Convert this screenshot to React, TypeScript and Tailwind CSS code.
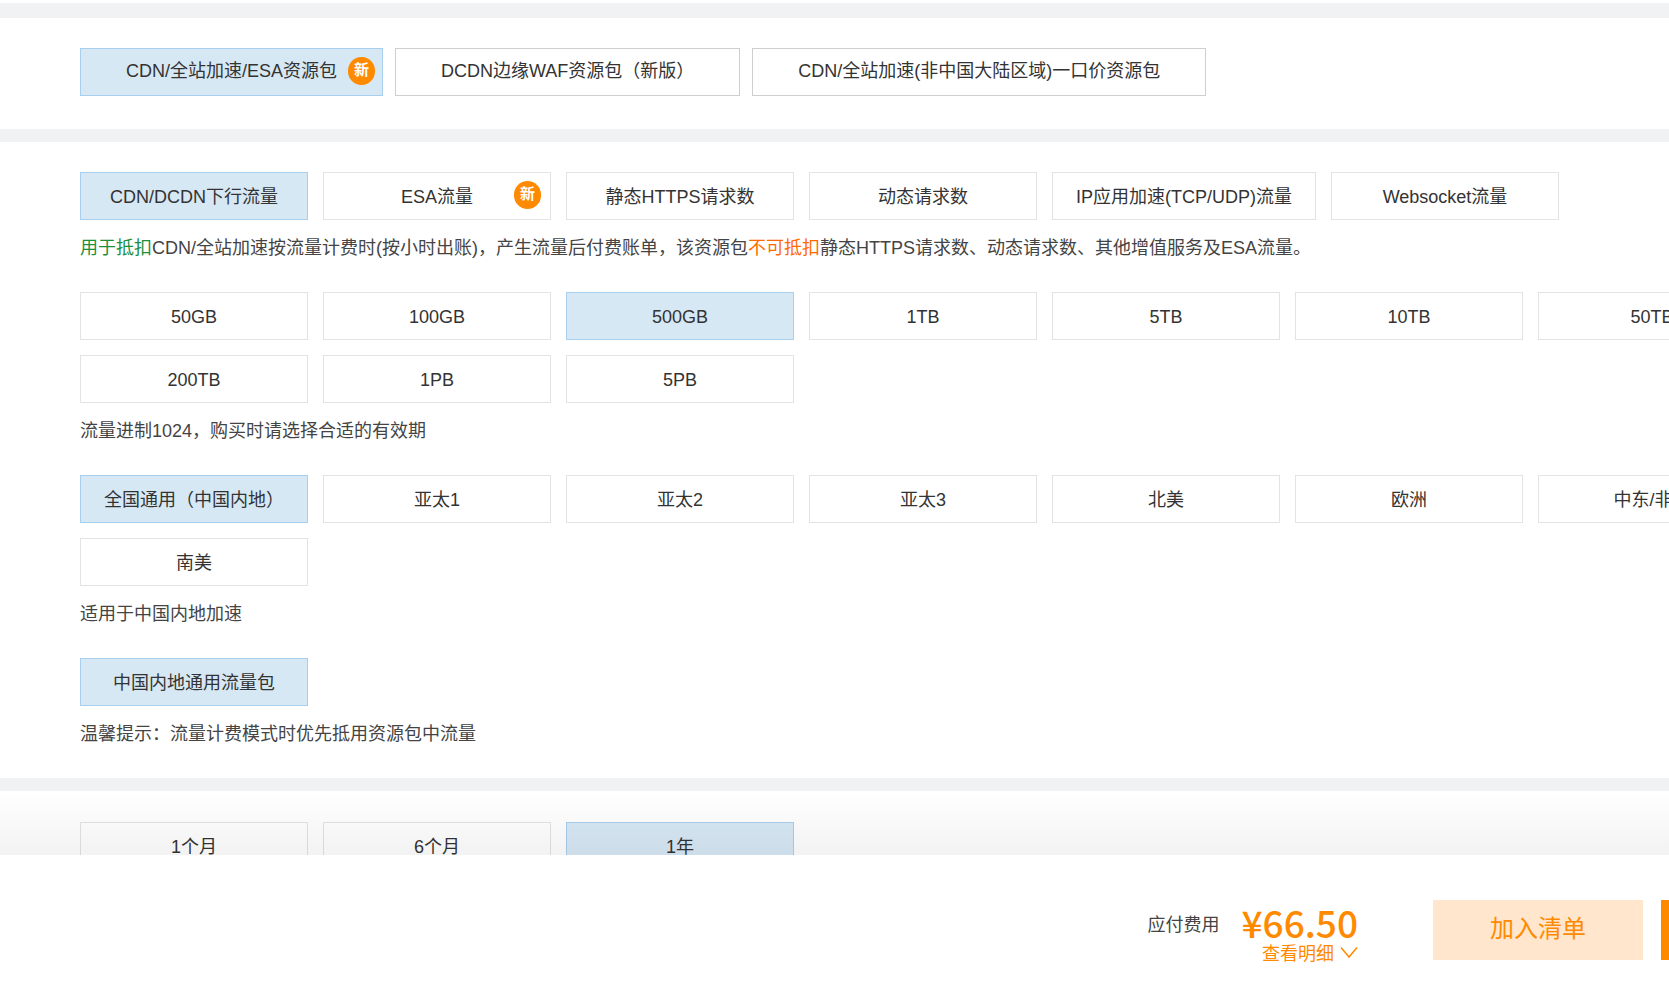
import React from 'react';

interface OptionProps {
  label: string;
  active?: boolean;
  badge?: boolean;
  wide?: boolean;
}

function Option({ label, active, badge, wide }: OptionProps) {
  return (
    <div
      className={`relative flex h-12 items-center justify-center whitespace-nowrap border text-[18px] text-[#333] ${
        wide ? 'px-[45px] pb-[2px]' : 'min-w-[228px] px-[23px] pt-[2px]'
      } ${active ? 'border-[#a9cfee] bg-[#d7e8f5]' : wide ? 'border-[#cfcfcf] bg-white' : 'border-[#e3e3e3] bg-white'}`}
    >
      {label}
      {badge && (
        <span className={`absolute top-[8px] flex h-[28px] w-[27px] items-center justify-center rounded-full bg-[#ff8a00] pb-[1px] text-[15px] font-bold text-white ${wide ? 'right-[7px]' : 'right-[9px]'}`}>
          新
        </span>
      )}
    </div>
  );
}

function Band() {
  return <div className="h-[13px] w-full bg-[#f1f2f4]" />;
}

export default function App() {
  return (
    <div
      className="flex h-[985px] w-full flex-col overflow-hidden bg-white"
      style={{ fontFamily: '"Liberation Sans", "Noto Sans CJK SC", sans-serif' }}
    >
      <div className="relative min-h-0 flex-1 overflow-hidden pt-[3px]">
        <div className="h-[15px] w-full bg-[#f1f2f4]" />

        {/* product type */}
        <section className="flex gap-3 px-20 pb-[33px] pt-[30px]">
          <Option wide active badge label="CDN/全站加速/ESA资源包" />
          <Option wide label="DCDN边缘WAF资源包（新版）" />
          <Option wide label="CDN/全站加速(非中国大陆区域)一口价资源包" />
        </section>
        <Band />

        {/* package options */}
        <section className="w-[1800px] pb-[32px] pl-20 pt-[30px]">
          <div className="flex gap-[15px]">
            <Option active label="CDN/DCDN下行流量" />
            <Option badge label="ESA流量" />
            <Option label="静态HTTPS请求数" />
            <Option label="动态请求数" />
            <Option label="IP应用加速(TCP/UDP)流量" />
            <Option label="Websocket流量" />
          </div>
          <p className="mt-[16px] text-[18px] leading-[24px] text-[#444]">
            <span className="text-[#1c8f3c]">用于抵扣</span>
            CDN/全站加速按流量计费时(按小时出账)，产生流量后付费账单，该资源包
            <span className="text-[#ff6a00]">不可抵扣</span>
            静态HTTPS请求数、动态请求数、其他增值服务及ESA流量。
          </p>

          <div className="mt-[32px] flex w-[1720px] flex-wrap gap-[15px]">
            <Option label="50GB" />
            <Option label="100GB" />
            <Option active label="500GB" />
            <Option label="1TB" />
            <Option label="5TB" />
            <Option label="10TB" />
            <Option label="50TB" />
            <Option label="200TB" />
            <Option label="1PB" />
            <Option label="5PB" />
          </div>
          <p className="mt-[16px] text-[18px] leading-[24px] text-[#444]">流量进制1024，购买时请选择合适的有效期</p>

          <div className="mt-[32px] flex w-[1720px] flex-wrap gap-[15px]">
            <Option active label="全国通用（中国内地）" />
            <Option label="亚太1" />
            <Option label="亚太2" />
            <Option label="亚太3" />
            <Option label="北美" />
            <Option label="欧洲" />
            <Option label="中东/非洲" />
            <Option label="南美" />
          </div>
          <p className="mt-[16px] text-[18px] leading-[24px] text-[#444]">适用于中国内地加速</p>

          <div className="mt-[32px] flex gap-[15px]">
            <Option active label="中国内地通用流量包" />
          </div>
          <p className="mt-[16px] text-[18px] leading-[24px] text-[#444]">温馨提示：流量计费模式时优先抵用资源包中流量</p>
        </section>
        <Band />

        {/* duration */}
        <section className="flex gap-[15px] px-20 pt-[31px]">
          <Option label="1个月" />
          <Option label="6个月" />
          <Option active label="1年" />
        </section>

        {/* fade above the footer */}
        <div className="absolute inset-x-0 bottom-0 h-[63px] bg-gradient-to-b from-black/0 to-black/5" />
      </div>

      {/* footer */}
      <footer className="flex h-[130px] shrink-0 items-start justify-end gap-[18px] overflow-hidden bg-white pl-20 pt-[45px]">
        <div className="mr-[57px] flex items-start gap-[22px]" style={{ fontFamily: '"Noto Sans CJK SC", sans-serif' }}>
          <span className="mt-[11px] text-[18px] leading-[24px] text-[#444]">应付费用</span>
          <div className="flex flex-col items-end">
            <span className="text-[37px] font-medium leading-[44px] text-[#ff8a00]">¥66.50</span>
            <span className="-mt-[3px] flex items-center gap-[6px] text-[18px] leading-[22px] text-[#ff8a00]">
              查看明细
              <svg width="18" height="13" viewBox="0 0 18 13" fill="none" stroke="#ff8a00" strokeWidth="1.5">
                <path d="M1 1.5 9 11l8-9.5" />
              </svg>
            </span>
          </div>
        </div>
        <button className="h-[60px] w-[210px] shrink-0 bg-[#ffe6cc] pb-[6px] text-[24px] text-[#ff8a00]" style={{ fontFamily: '"Noto Sans CJK SC", sans-serif' }}>
          加入清单
        </button>
        <button className="h-[60px] w-[210px] shrink-0 -mr-[202px] bg-[#ff8a00]" />
      </footer>
    </div>
  );
}
